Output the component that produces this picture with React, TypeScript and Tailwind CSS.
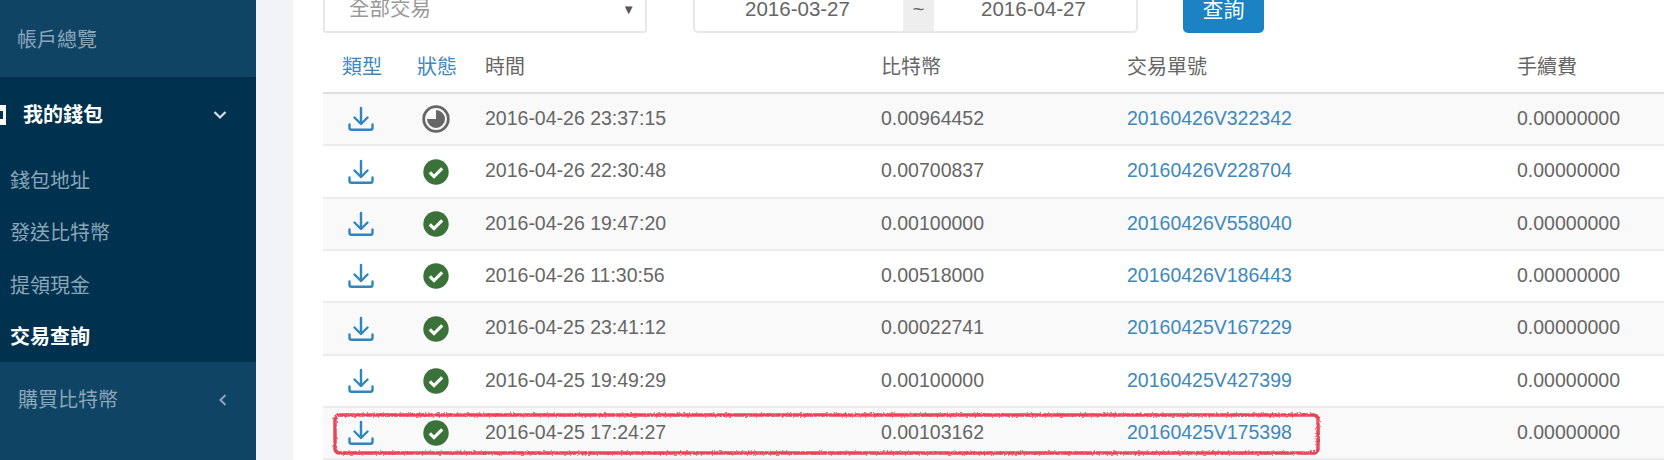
import React from "react";

const rows: [string, string, string, boolean][] = [
  ["2016-04-26 23:37:15", "0.00964452", "20160426V322342", true],
  ["2016-04-26 22:30:48", "0.00700837", "20160426V228704", false],
  ["2016-04-26 19:47:20", "0.00100000", "20160426V558040", false],
  ["2016-04-26 11:30:56", "0.00518000", "20160426V186443", false],
  ["2016-04-25 23:41:12", "0.00022741", "20160425V167229", false],
  ["2016-04-25 19:49:29", "0.00100000", "20160425V427399", false],
  ["2016-04-25 17:24:27", "0.00103162", "20160425V175398", false],
];

const font = "[font-family:'Liberation_Sans','Noto_Sans_CJK_TC',sans-serif]";

function DownloadIcon() {
  return (
    <svg width="26" height="26" viewBox="0 0 26 26" fill="none" stroke="#2f86bf" strokeWidth="2.4" strokeLinecap="round" strokeLinejoin="round" className="mx-auto block">
      <path d="M13 2v15.5" />
      <path d="M6.5 11.5 13 18l6.5-6.5" />
      <path d="M1.5 18.5v3.2a2 2 0 0 0 2 2h19a2 2 0 0 0 2-2v-3.2" />
    </svg>
  );
}

function CheckIcon() {
  return (
    <svg width="26" height="26" viewBox="0 0 26 26" className="mx-auto block">
      <circle cx="13" cy="13" r="12.7" fill="#3b7239" />
      <path d="M6.8 13.4 11 17.6l8.2-8.2" fill="none" stroke="#fff" strokeWidth="3.2" />
    </svg>
  );
}

function PendingIcon() {
  return (
    <svg width="28" height="28" viewBox="0 0 28 28" className="mx-auto block">
      <circle cx="14" cy="14" r="12.3" fill="none" stroke="#666" strokeWidth="2.8" />
      <path d="M14 5A9 9 0 1 1 5 14H14Z" fill="#666" />
    </svg>
  );
}

export default function App() {
  return (
    <div className={`flex h-[460px] w-[1664px] overflow-hidden bg-white ${font}`}>
      <aside className="flex w-[256px] shrink-0 flex-col bg-[#0f4465] text-[20px] text-[#8ba5b9]">
        <div className="flex h-[77px] items-center pl-[17px] pt-[3px]">帳戶總覽</div>
        <div className="flex h-[285px] flex-col bg-[#00324f]">
          <div className="flex h-[76px] items-center justify-between pl-0 pr-[29px] font-bold text-white">
            <div className="flex items-center">
              <span className="mr-[17px] flex h-[20px] w-[6px] items-center bg-white">
                <span className="h-[8px] w-[3px] bg-[#00324f]" />
              </span>
              我的錢包
            </div>
            <svg width="14" height="10" viewBox="0 0 14 10" fill="none" stroke="#d5dee5" strokeWidth="2.2"><path d="M1.5 2 7 7.5 12.5 2" /></svg>
          </div>
          <div className="flex flex-col pl-[10px] pt-[2px]">
            <div className="flex h-[52.5px] items-center">錢包地址</div>
            <div className="flex h-[52.5px] items-center">發送比特幣</div>
            <div className="flex h-[52.5px] items-center">提領現金</div>
            <div className="flex h-[50px] items-center font-bold text-white">交易查詢</div>
          </div>
        </div>
        <div className="flex h-[76px] items-center justify-between pl-[18px] pr-[28px]">
          購買比特幣
          <svg width="10" height="14" viewBox="0 0 10 14" fill="none" stroke="#8ba5b9" strokeWidth="2"><path d="M7.5 2 2.5 7l5 5" /></svg>
        </div>
      </aside>

      <div className="w-[37px] shrink-0 bg-[#f2f3f7]" />

      <main className="relative min-w-0 flex-1 pl-[30px] text-[19.5px] text-[#666]">
        <div className="flex h-[33px] items-end overflow-hidden text-[20.5px]">
          <div className="flex h-[47px] w-[324px] items-center justify-between rounded-[3px] border-2 border-[#e8e8e8] pl-[24px] pr-[10px] text-[#999]">
            <span>全部交易</span>
            <span className="text-[13px] text-[#555]">▼</span>
          </div>
          <div className="ml-[46px] flex h-[47px] w-[445px] overflow-hidden rounded-[5px] border-2 border-[#e8e8e8]">
            <div className="flex w-[208px] items-center justify-center pr-[3px]">2016-03-27</div>
            <div className="flex w-[31px] items-center justify-center bg-[#eeeeee] text-[#666]">~</div>
            <div className="flex flex-1 items-center justify-center pr-[3px]">2016-04-27</div>
          </div>
          <div className="ml-[45px] flex h-[47px] w-[81px] items-center justify-center rounded-[5px] bg-[#1b82c4] text-[21px] text-white">查詢</div>
        </div>

        <table className="w-full table-fixed border-collapse">
          <thead>
            <tr className="h-[60px] border-b-2 border-[#dedede] text-left text-[20px]">
              <th className="w-[76px] pl-[2px] pt-[8px] text-center font-normal text-[#4088bb]">類型</th>
              <th className="w-[76px] pt-[8px] text-center font-normal text-[#4088bb]">狀態</th>
              <th className="w-[394px] pl-[10px] pt-[8px] font-normal">時間</th>
              <th className="w-[246px] pl-[12px] pt-[8px] font-normal">比特幣</th>
              <th className="w-[390px] pl-[12px] pt-[8px] font-normal">交易單號</th>
              <th className="pl-[12px] pt-[8px] font-normal">手續費</th>
            </tr>
          </thead>
          <tbody>
            {rows.map(([time, btc, id, pending], i) => (
              <tr key={id} className={`h-[52.35px] border-b-2 border-[#ececec] ${i % 2 === 0 ? "bg-[#f9f9f9]" : "bg-white"}`}>
                <td><DownloadIcon /></td>
                <td className="pr-[2px]">{pending ? <PendingIcon /> : <CheckIcon />}</td>
                <td className="pb-[1px] pl-[10px]">{time}</td>
                <td className="pb-[1px] pl-[12px]">{btc}</td>
                <td className="pb-[1px] pl-[12px] text-[#4088bb]">{id}</td>
                <td className="pb-[1px] pl-[12px]">0.00000000</td>
              </tr>
            ))}
          </tbody>
        </table>

        <svg className="absolute left-[39px] top-[412px]" width="996" height="46" viewBox="0 0 996 46" fill="none">
          <defs>
            <filter id="rough" x="-2%" y="-20%" width="104%" height="140%">
              <feTurbulence type="fractalNoise" baseFrequency="0.6" numOctaves="2" seed="4" />
              <feDisplacementMap in="SourceGraphic" scale="3" />
            </filter>
          </defs>
          <rect x="3" y="3" width="983" height="38" rx="4" stroke="#e6263c" strokeWidth="3.5" opacity="0.85" filter="url(#rough)" />
        </svg>
      </main>
    </div>
  );
}
